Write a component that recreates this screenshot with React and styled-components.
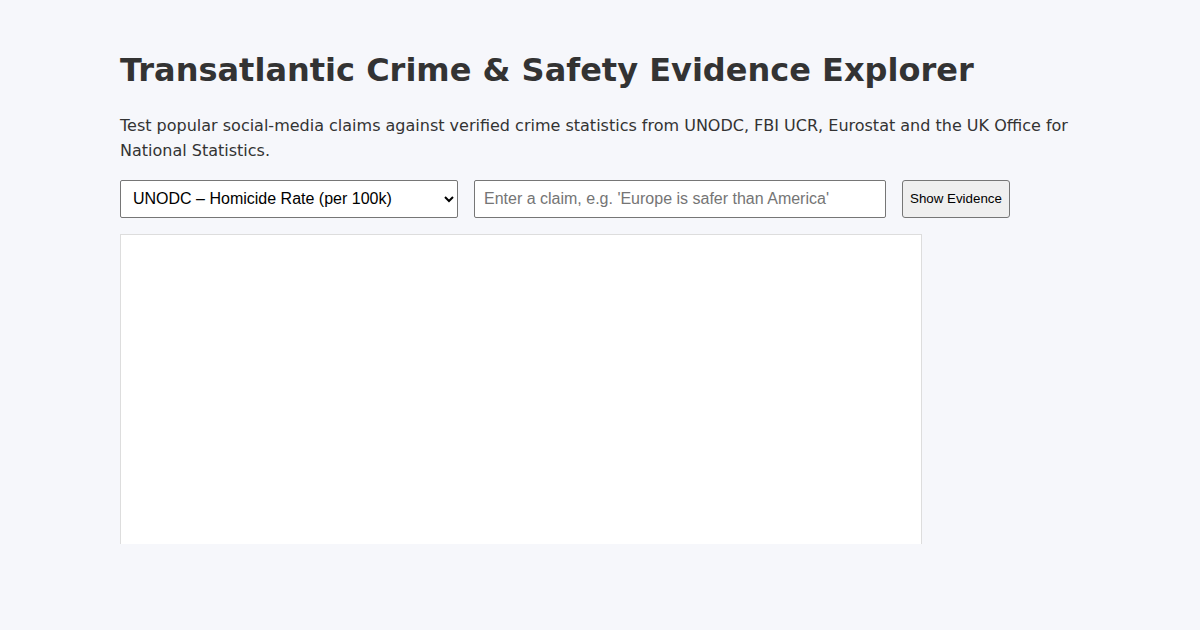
import styled, {createGlobalStyle} from "styled-components";

const GlobalStyle = createGlobalStyle`
  html, body {
    margin: 0;
    padding: 0;
    background: #f6f7fb;
  }
  body {
    font-family: "DejaVu Sans", sans-serif;
    color: #333333;
  }
`
const Page = styled.div`
  height: 630px;
  overflow: hidden;
`
const Main = styled.main`
  max-width: 960px;
  margin: 0 auto;
  padding: 51px 0 0;
`
const Title = styled.h1`
  font-size: 32px;
  font-weight: bold;
  line-height: 1.2;
  margin: 0 0 23.4px;
`
const Lead = styled.p`
  font-size: 16px;
  line-height: 25px;
  margin: 0 0 17px;
`
const Controls = styled.div`
  display: flex;
  gap: 16px;
  margin-bottom: 16px;
`
const Select = styled.select`
  width: 338px;
  height: 38px;
  padding: 0 8px;
  font-family: "Liberation Sans", Arial, sans-serif;
  font-size: 16px;
  color: #000;
  background: #fff;
  border: 1px solid #767676;
  border-radius: 2px;
`
const ClaimInput = styled.input`
  width: 412px;
  height: 38px;
  box-sizing: border-box;
  padding: 0 9px;
  font-family: "Liberation Sans", Arial, sans-serif;
  font-size: 16px;
  border: 1px solid #767676;
  border-radius: 2px;
  background: #fff;
  &::placeholder {
    color: #757575;
  }
`
const Button = styled.button`
  height: 38px;
  padding: 0 7px;
  font-family: "Liberation Sans", Arial, sans-serif;
  font-size: 13.33px;
  color: #000;
  background: #efefef;
  border: 1px solid #767676;
  border-radius: 3px;
`
const ChartClip = styled.div`
  height: 310px;
  overflow: hidden;
`
const Chart = styled.div`
  width: 800px;
  height: 400px;
  background: #fff;
  border: 1px solid #dddddd;
`

const App = () => {
    return (
        <Page>
            <GlobalStyle/>
            <Main>
                <Title>Transatlantic Crime &amp; Safety Evidence Explorer</Title>
                <Lead>
                    Test popular social-media claims against verified crime statistics from UNODC, FBI UCR,
                    Eurostat and the UK Office for National Statistics.
                </Lead>
                <Controls>
                    <Select defaultValue="unodc">
                        <option value="unodc">UNODC – Homicide Rate (per 100k)</option>
                        <option value="fbi">FBI UCR – Violent Crime</option>
                        <option value="eurostat">Eurostat – Recorded Offences</option>
                        <option value="ons">ONS – Crime Survey</option>
                    </Select>
                    <ClaimInput placeholder="Enter a claim, e.g. 'Europe is safer than America'"/>
                    <Button>Show Evidence</Button>
                </Controls>
                <ChartClip>
                    <Chart/>
                </ChartClip>
            </Main>
        </Page>
    )
}

export default App
